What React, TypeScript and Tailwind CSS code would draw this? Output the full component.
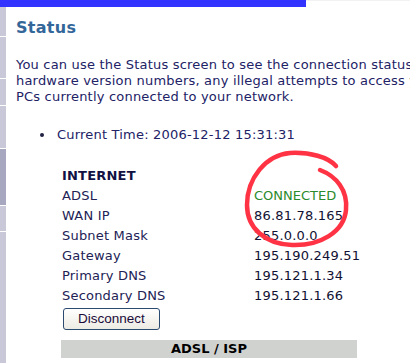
import React from "react";

const rows: [string, string][] = [
  ["ADSL", "CONNECTED"],
  ["WAN IP", "86.81.78.165"],
  ["Subnet Mask", "255.0.0.0"],
  ["Gateway", "195.190.249.51"],
  ["Primary DNS", "195.121.1.34"],
  ["Secondary DNS", "195.121.1.66"],
];

export default function App() {
  return (
    <div
      className="relative w-[410px] h-[363px] overflow-hidden bg-white"
      style={{ fontFamily: '"DejaVu Sans", Verdana, sans-serif' }}
    >
      {/* top bar */}
      <div className="flex h-[7px]">
        <div className="w-[306px] bg-[#3333ff]" />
        <div className="flex-1 border-t border-[#f2f2f2]" />
      </div>
      <div className="flex h-[356px]">
        {/* sidebar */}
        <div className="w-[6px] flex flex-col gap-px bg-white">
          <div className="h-[29px] bg-[#c8c8d8]" />
          <div className="h-[41px] bg-[#c8c8d8]" />
          <div className="h-[26px] bg-[#c8c8d8]" />
          <div className="h-[42px] bg-[#c8c8d8]" />
          <div className="h-[56px] bg-[#a7a7c0]" />
          <div className="h-[25px] bg-[#c8c8d8]" />
          <div className="flex-1 bg-[#c8c8d8]" />
        </div>
        {/* content */}
        <div className="flex-1 pl-[10px] min-w-0 overflow-hidden">
          <h1 className="mt-[11px] text-[16px] leading-[20px] font-bold tracking-[0.3px] text-[#336699]">
            Status
          </h1>
          <div className="mt-[19px] text-[13px] leading-[16px] tracking-[0.2px] text-[#222266] whitespace-nowrap">
            <div>You can use the Status screen to see the connection status for the ADSL line,</div>
            <div>hardware version numbers, any illegal attempts to access your network, and all</div>
            <div>PCs currently connected to your network.</div>
          </div>
          <div className="mt-[21.5px] flex items-center text-[13px] leading-[16px] tracking-[0.2px] text-[#222266] whitespace-nowrap">
            <span className="ml-[24px] w-[4px] h-[4px] rounded-full bg-[#222244]" />
            <span className="ml-[13px]">Current Time: 2006-12-12 15:31:31</span>
          </div>
          <div className="mt-[23px] ml-[46px] text-[13px] leading-[20px] tracking-[0.2px] whitespace-nowrap">
            <div className="font-bold text-[#111144]">INTERNET</div>
            {rows.map(([k, v]) => (
              <div key={k} className="flex">
                <div className="w-[192px] text-[#222255]">{k}</div>
                <div className={k === "ADSL" ? "text-[#2b8a2b] tracking-normal" : "text-[#111133]"}>{v}</div>
              </div>
            ))}
          </div>
          <button
            className="mt-[2.5px] ml-[47px] w-[97px] h-[22px] rounded-[3px] border border-[#2b4a70] bg-gradient-to-b from-white to-[#ecebe3] text-[13.5px] leading-[20px] text-[#1a0a3a] flex items-center justify-center"
            style={{ fontFamily: '"Liberation Sans", Arial, sans-serif' }}
          >
            Disconnect
          </button>
          <div className="mt-[10px] ml-[45px] w-[296px] h-[18px] bg-[#d0d2d0] flex items-center justify-center text-[13px] font-bold text-black">
            ADSL / ISP
          </div>
        </div>
      </div>
      {/* red hand-drawn circle */}
      <svg
        className="absolute left-0 top-0 pointer-events-none"
        width="410"
        height="363"
        viewBox="0 0 410 363"
      >
        <path
          d="M320 170 C336 176 348 190 346 210 C344 232 320 246 292 245 C265 244 247 228 247 205 C247 178 266 155 290 153 C310 152 328 157 336 166"
          fill="none"
          stroke="#ff3344"
          strokeWidth="4.5"
          strokeLinecap="round"
        />
      </svg>
    </div>
  );
}
